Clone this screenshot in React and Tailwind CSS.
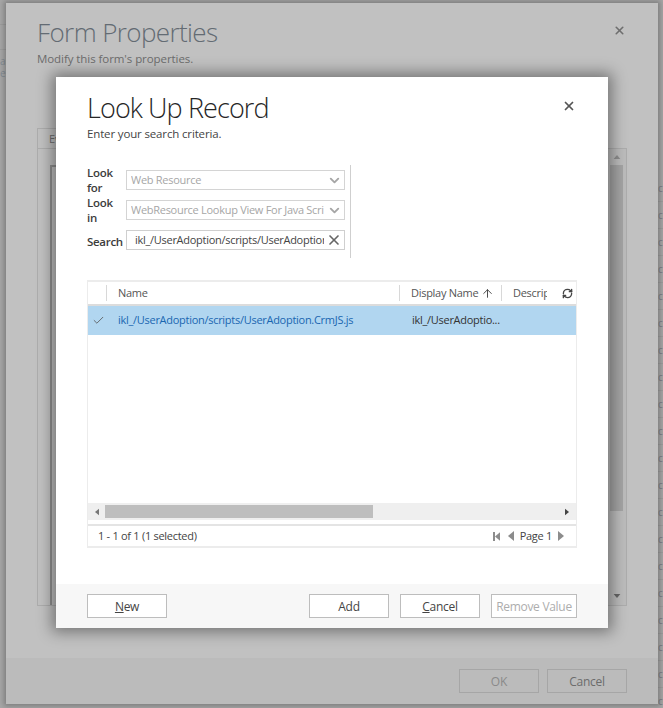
import { X, ChevronDown, Check, ArrowUp, RefreshCw } from 'lucide-react';

const FONT = "font-['Open_Sans','Noto_Sans',sans-serif]";

const STRIP_ROWS = Array.from({ length: 20 }, (_, i) => i);

const Tri = ({ dir = 'left', className = '' }) => {
  const points = {
    left: '6,0 6,10 0,5',
    right: '0,0 0,10 6,5',
    up: '0,6 10,6 5,0',
    down: '0,0 10,0 5,6',
  };
  const box = dir === 'left' || dir === 'right' ? '0 0 6 10' : '0 0 10 6';
  return (
    <svg viewBox={box} className={className} fill="currentColor">
      <polygon points={points[dir]} />
    </svg>
  );
};

const Btn = ({ className = 'text-[#444]', children }) => (
  <button className={`h-[24px] border border-[#bdbdbd] bg-white pt-[2px] text-[12px] leading-none tracking-[-0.3px] ${className}`}>
    {children}
  </button>
);

const LookupField = ({ label, value }) => (
  <div className="flex h-[30px] items-center">
    <div className="w-[39px] text-[11.5px] leading-[15px] font-semibold tracking-[-0.3px] text-[#3c3c3c]">{label}</div>
    <div className="flex h-[20px] w-[219px] items-center border border-[#d4d4d4] pl-[4px] pr-[2px] pt-[1px] text-[11px] tracking-[-0.28px] text-[#a6a6a6]">
      <span className="flex-1 overflow-hidden whitespace-nowrap">{value}</span>
      <ChevronDown className="h-[15px] w-[15px] shrink-0 text-[#a6a6a6]" strokeWidth={3} />
    </div>
  </div>
);

function LookupDialog() {
  return (
    <div className="absolute left-[56px] top-[77px] flex h-[551px] w-[552px] flex-col bg-white shadow-[0_0_14px_4px_rgba(0,0,0,0.4)]">
      <div className="flex-1 px-[31px]">
        <div className="flex items-start justify-between">
          <div>
            <h1 className="mt-[13px] text-[27px] leading-[36px] font-light tracking-[-0.9px] text-[#262626]">Look Up Record</h1>
            <p className="text-[11.5px] leading-[16px] tracking-[-0.15px] text-[#444]">Enter your search criteria.</p>
          </div>
          <X className="mr-[1px] mt-[22px] h-[14px] w-[14px] text-[#555]" strokeWidth={3} />
        </div>

        {/* Search criteria */}
        <div className="mt-[23px] h-[93px] w-[264px] border-r border-[#cfcfcf]">
          <LookupField label={<>Look<br />for</>} value="Web Resource" />
          <LookupField label={<>Look<br />in</>} value="WebResource Lookup View For Java Scri" />
          <div className="flex items-start pt-[5px]">
            <div className="w-[39px] pt-[4px] text-[11.5px] leading-[15px] font-semibold tracking-[-0.3px] text-[#3c3c3c]">Search</div>
            <div className="flex h-[20px] w-[219px] items-center border border-[#cfcfcf] pl-[8px] text-[11px] tracking-[-0.28px] text-[#444]">
              <span className="w-[189px] overflow-hidden whitespace-nowrap">ikl_/UserAdoption/scripts/UserAdoption.CrmJS.js</span>
              <X className="ml-[2px] h-[16px] w-[16px] shrink-0 text-[#666]" strokeWidth={2.5} />
            </div>
          </div>
        </div>

        {/* Grid */}
        <div className="mt-[22px] flex h-[268px] w-[490px] flex-col border-x border-y-2 border-[#ececec] tracking-[-0.28px]">
          <div className="flex h-[24px] items-center border-b-2 border-[#dcdcdc] text-[11px] text-[#555]">
            <div className="ml-[18px] h-[16px] border-l border-[#d8d8d8]" />
            <div className="ml-[11px] w-[281px]">Name</div>
            <div className="h-[16px] border-l border-[#d8d8d8]" />
            <div className="ml-[11px] flex w-[90px] items-center gap-[3px]">
              Display Name <ArrowUp className="h-[13px] w-[13px] text-[#444]" strokeWidth={1.75} />
            </div>
            <div className="h-[16px] border-l border-[#d8d8d8]" />
            <div className="ml-[11px] w-[34px] overflow-hidden whitespace-nowrap">Description</div>
            <RefreshCw className="ml-[15px] h-[11px] w-[11px] text-[#444]" strokeWidth={3} />
          </div>
          <div className="flex h-[29px] items-center bg-[#b1d6f0] text-[11px]">
            <Check className="ml-[4px] h-[13px] w-[13px] text-[#555]" strokeWidth={1.5} />
            <div className="ml-[13px] w-[294px] whitespace-nowrap text-[#1a66b0]">ikl_/UserAdoption/scripts/UserAdoption.CrmJS.js</div>
            <div className="text-[#333]">ikl_/UserAdoptio...</div>
          </div>
          <div className="flex-1" />
          <div className="flex h-[17px] items-center bg-[#efefef] text-[#777]">
            <Tri dir="left" className="ml-[7px] h-[8px] w-[4px]" />
            <div className="ml-[6px] h-[13px] w-[268px] bg-[#bebebe]" />
            <Tri dir="right" className="ml-auto mr-[7px] h-[8px] w-[4px] text-[#444]" />
          </div>
          <div className="mt-[4px] flex h-[22px] items-center border-t-2 border-[#e4e4e4] px-[10px] text-[11px] text-[#444]">
            <span className="flex-1">1 - 1 of 1 (1 selected)</span>
            <div className="flex items-center text-[#8c8c8c]">
              <div className="h-[9px] w-[2px] bg-current" />
              <Tri dir="left" className="h-[9px] w-[5px]" />
              <Tri dir="left" className="ml-[8px] h-[10px] w-[6px]" />
              <span className="mx-[6px] text-[#444]">Page 1</span>
              <Tri dir="right" className="mr-[2px] h-[10px] w-[6px]" />
            </div>
          </div>
        </div>
      </div>

      {/* Footer */}
      <div className="flex h-[44px] items-center bg-[#f7f7f7] px-[31px]">
        <Btn className="w-[80px] text-[#444]"><span className="underline">N</span>ew</Btn>
        <Btn className="ml-auto w-[80px] text-[#444]">Add</Btn>
        <Btn className="ml-[11px] w-[80px] text-[#444]"><span className="underline">C</span>ancel</Btn>
        <Btn className="ml-[11px] w-[86px] text-[#adadad]">Remove Value</Btn>
      </div>
    </div>
  );
}

export default function App() {
  return (
    <div className={`relative h-[708px] w-[663px] overflow-hidden bg-[#a6a6a6] ${FONT}`}>
      {/* Page peeking out behind the dialogs */}
      <div className="absolute left-0 top-[24px] h-[78px] w-[6px] overflow-hidden text-[10px] leading-[12px] text-[#838b92]">
        <div className="h-[26px] border-y border-[#9c9c9c]" />
        <div className="pt-[5px]">an<br />e</div>
      </div>
      <div className="absolute right-0 top-[175px] w-[5px] overflow-hidden">
        {STRIP_ROWS.map(i => (
          <div key={i} className="h-[27px] whitespace-nowrap border-b border-[#9c9c9c] text-[10px] leading-[26px] text-[#7d7d85]">co</div>
        ))}
      </div>

      {/* Form Properties dialog behind */}
      <div className="relative ml-[6px] mt-[3px] flex h-[701px] w-[652px] flex-col bg-[#c1c1c1] shadow-[0_0_5px_2px_rgba(0,0,0,0.25)]">
        <div className="flex-1 px-[31px]">
          <div className="flex items-start justify-between">
            <div>
              <h2 className="mt-[11px] text-[26px] leading-[36px] font-light tracking-[-0.6px] text-[#636b73]">Form Properties</h2>
              <p className="text-[11.5px] leading-[17px] tracking-[-0.07px] text-[#6c6c6c]">Modify this form's properties.</p>
            </div>
            <X className="mr-[1px] mt-[21px] h-[13px] w-[13px] text-[#6e6e6e]" strokeWidth={3} />
          </div>
          <div className="mt-[61px] h-[20px] w-[60px] border-l border-t border-[#adadad] pl-[11px] pt-[2px] text-[11px] text-[#6c6c6c]">Ev</div>
          <div className="flex h-[458px] w-[590px] border border-[#adadad]">
            <div className="flex-1 pl-[12px] pt-[16px]">
              <div className="h-full border-l-2 border-t-2 border-[#8f8f8f]" />
            </div>
            <div className="flex w-[19px] flex-col items-center bg-[#bcbcbc] text-[#8e8e8e]">
              <Tri dir="up" className="mt-[6px] h-[4px] w-[8px]" />
              <div className="mt-[6px] h-[346px] w-[13px] bg-[#a4a4a4]" />
              <Tri dir="down" className="mt-auto mb-[7px] h-[4px] w-[8px] text-[#666]" />
            </div>
          </div>
        </div>
        <div className="flex h-[46px] items-center justify-end gap-[8px] bg-[#bbbbbb] px-[31px]">
          <button className="h-[24px] w-[80px] border border-[#a6a6a6] pt-[1px] text-[12px] leading-none text-[#8a8a8a]">OK</button>
          <button className="h-[24px] w-[80px] border border-[#a6a6a6] pt-[1px] text-[12px] leading-none tracking-[-0.3px] text-[#6c6c6c]">Cancel</button>
        </div>
      </div>
      <LookupDialog />
    </div>
  );
}
